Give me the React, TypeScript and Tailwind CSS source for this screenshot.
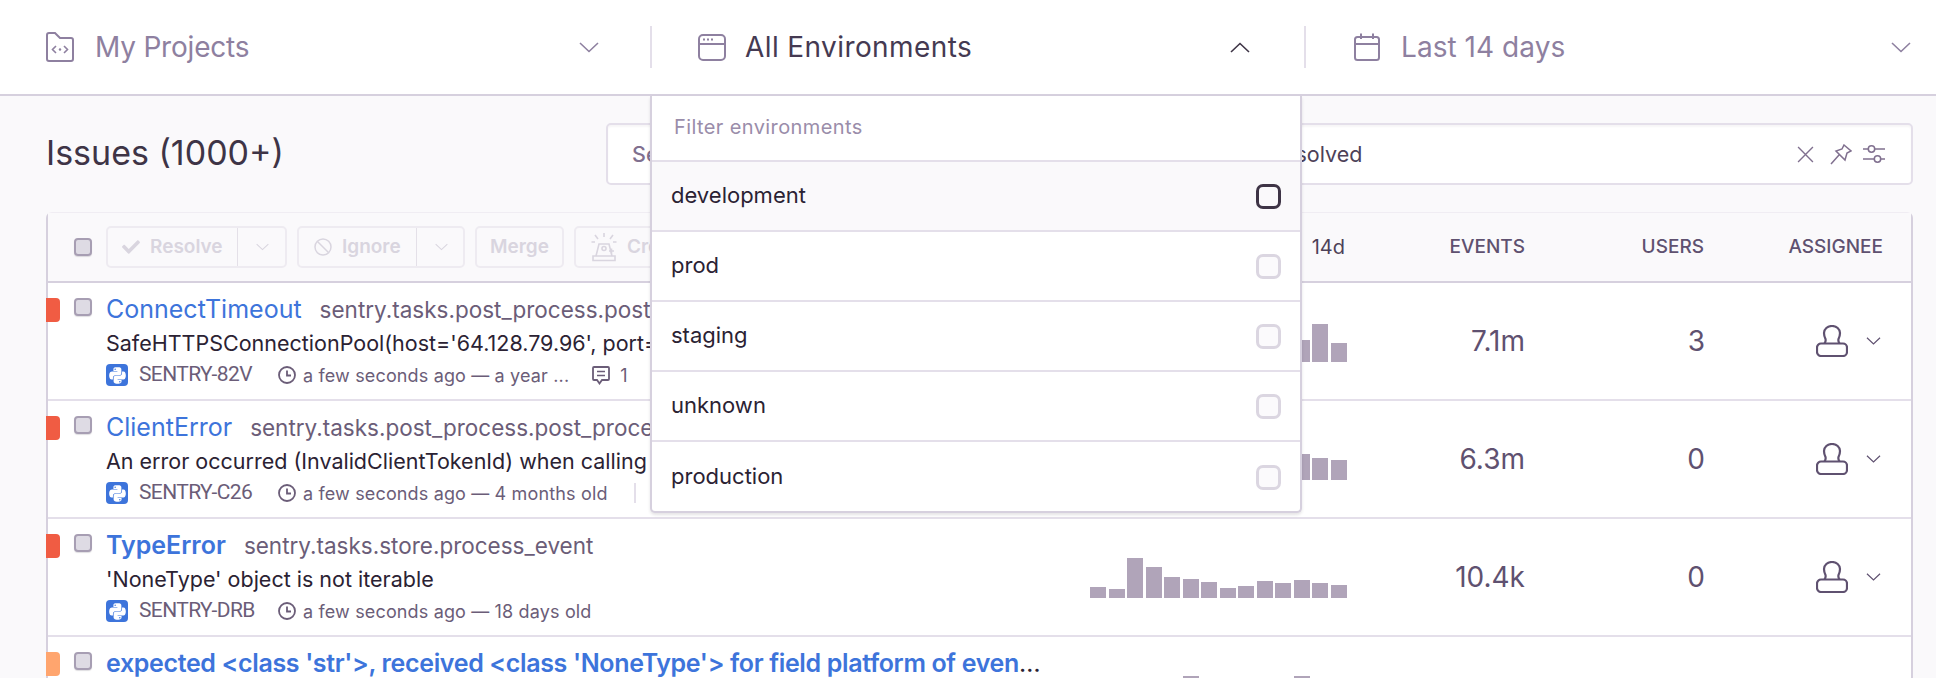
import { FaPython, FaCheck } from 'react-icons/fa';

const Chevron = ({ up = false, className = '' }: { up?: boolean; className?: string }) => (
  <svg viewBox="0 0 20 11" fill="none" stroke="currentColor" strokeWidth={1.6} className={className}>
    <path d={up ? 'M1 10 L10 1.5 L19 10' : 'M1 1 L10 9.5 L19 1'} />
  </svg>
);

const FolderIcon = () => (
  <svg viewBox="0 0 28 30" fill="none" stroke="currentColor" strokeWidth={2} className="h-[30px] w-[28px]">
    <path d="M1 3 a2 2 0 0 1 2-2 h6 l5 5 h11 a2 2 0 0 1 2 2 v19 a2 2 0 0 1-2 2 H3 a2 2 0 0 1-2-2 z" />
    <path d="M10 14 l-3.500 3.500 l3.500 3.500 M18 14 l3.500 3.500 l-3.500 3.500" strokeWidth={1.6} />
    <circle cx="14" cy="17.500" r="1.200" fill="currentColor" stroke="none" />
  </svg>
);

const WindowIcon = () => (
  <svg viewBox="0 0 28 27" fill="none" stroke="currentColor" strokeWidth={2} className="h-[27px] w-[28px]">
    <rect x="1" y="1" width="26" height="25" rx="4" />
    <path d="M1 10 H27" />
    <path d="M5 5.500 h2 M9 5.500 h2 M13 5.500 h2" strokeWidth={1.800} />
  </svg>
);

const CalendarIcon = () => (
  <svg viewBox="0 0 26 28" fill="none" stroke="currentColor" strokeWidth={2} className="h-[28px] w-[26px]">
    <rect x="1" y="4" width="24" height="23" rx="2.500" />
    <path d="M1 11 H25 M7 0.500 V6 M19 0.500 V6" />
  </svg>
);

const ClockIcon = () => (
  <svg viewBox="0 0 18 18" fill="none" stroke="currentColor" strokeWidth={1.800} className="h-[18px] w-[18px] shrink-0">
    <circle cx="9" cy="9" r="8" />
    <path d="M9 4.500 V9.500 H13" />
  </svg>
);

const CommentIcon = () => (
  <svg viewBox="0 0 18 19" fill="none" stroke="currentColor" strokeWidth={1.800} className="h-[19px] w-[18px] shrink-0">
    <path d="M2 1 H16 a1 1 0 0 1 1 1 V13 a1 1 0 0 1-1 1 H10 L7.500 17.500 L5 14 H2 a1 1 0 0 1-1-1 V2 a1 1 0 0 1 1-1 z" />
    <path d="M5 5.500 H13 M5 9.500 H13" strokeWidth={1.500} />
  </svg>
);

const UserIcon = () => (
  <svg viewBox="0 0 32 32" fill="none" stroke="currentColor" strokeWidth={2.200} className="h-[32px] w-[32px]">
    <path d="M5 18.500 H27 a4 4 0 0 1 4 4 v4.500 a4 4 0 0 1-4 4 H5 a4 4 0 0 1-4-4 v-4.500 a4 4 0 0 1 4-4 z" />
    <path d="M8.500 18.500 C9.500 17 10 16 9.500 14 C8.500 12 8 10 8 8 C8 4 11.500 1 16 1 C20.500 1 24 4 24 8 C24 10 23.500 12 22.500 14 C22 16 22.500 17 23.500 18.500" />
  </svg>
);

const BanIcon = () => (
  <svg viewBox="0 0 18 18" fill="none" stroke="currentColor" strokeWidth={1.500} className="h-[18px] w-[18px]">
    <circle cx="9" cy="9" r="8" />
    <path d="M3.500 3.500 L14.500 14.500" />
  </svg>
);

const SirenIcon = () => (
  <svg viewBox="0 0 26 30" fill="none" stroke="currentColor" strokeWidth={1.600} className="h-[30px] w-[26px]">
    <path d="M2 28.500 H24 V24 H2 z" />
    <path d="M5 24 L8 12 H18 L21 24" />
    <circle cx="13" cy="16.500" r="2" />
    <path d="M13 1 V5 M4 3 L7 7 M22 3 L19 7 M0.500 10 H4 M22 10 H25.500 M18 19 H23 M20.500 16.500 V21.500" />
  </svg>
);

const Checkbox = () => (
  <div className="h-[18px] w-[18px] shrink-0 rounded-[4px] border-2 border-[#a79eb3] bg-[#dedbe4] shadow-[0_1px_1px_rgba(43,34,51,0.15)]" />
);

const Bars = ({ heights }: { heights: number[] }) => (
  <div className="flex h-[42px] w-[257px] shrink-0 items-end gap-[2.500px]">
    {heights.map((h, i) => (
      <div key={i} className="w-[16px] shrink-0 bg-[#b0a4b9]" style={{ height: h }} />
    ))}
  </div>
);

const ENVIRONMENTS = ['development', 'prod', 'staging', 'unknown', 'production'];

const ISSUES = [
  {
    title: 'ConnectTimeout',
    sub: 'sentry.tasks.post_process.post_process_group',
    msg: "SafeHTTPSConnectionPool(host='64.128.79.96', port=443): Max retries exceeded",
    id: 'SENTRY-82V',
    age: 'a few seconds ago — a year ...',
    comments: true,
    divider: false,
    bars: [6, 8, 9, 12, 8, 7, 10, 9, 6, 7, 8, 22, 38, 19],
    events: '7.1m',
    users: '3',
  },
  {
    title: 'ClientError',
    sub: 'sentry.tasks.post_process.post_process_group',
    msg: 'An error occurred (InvalidClientTokenId) when calling the GetCallerIdentity',
    id: 'SENTRY-C26',
    age: 'a few seconds ago — 4 months old',
    comments: false,
    divider: true,
    bars: [6, 8, 9, 12, 8, 7, 10, 9, 6, 7, 8, 26, 22, 20],
    events: '6.3m',
    users: '0',
  },
  {
    title: 'TypeError',
    bold: true,
    sub: 'sentry.tasks.store.process_event',
    msg: "'NoneType' object is not iterable",
    id: 'SENTRY-DRB',
    age: 'a few seconds ago — 18 days old',
    comments: false,
    divider: false,
    bars: [11, 9, 40, 31, 21, 19, 16, 10, 12, 17, 15, 18, 15, 13],
    events: '10.4k',
    users: '0',
  },
  {
    title: "expected <class 'str'>, received <class 'NoneType'> for field platform of event",
    bold: true,
    sub: '',
    msg: '',
    id: '',
    age: '',
    comments: false,
    divider: false,
    bars: [20, 24, 30, 36, 37, 40, 28, 22, 24, 30, 38, 40, 38, 30],
    events: '',
    users: '',
    warn: true,
  },
];

export default function App() {
  return (
    <div className="relative h-[678px] overflow-hidden bg-[#faf9fb] font-['Inter',sans-serif] text-[#2b2233]">
      {/* Global selection header */}
      <header className="flex h-[96px] items-center border-b-2 border-[#d6d0de] bg-white">
        <div className="flex h-[42px] w-[650px] items-center pl-[46px] pr-[51px] text-[#8e80a0]">
          <FolderIcon />
          <span className="ml-[21px] flex-1 pb-[1px] text-[28px] tracking-[-0.2px]">My Projects</span>
          <Chevron className="h-[11px] w-[20px]" />
        </div>
        <div className="flex h-[42px] w-[654px] items-center border-l-2 border-[#e4dfea] pl-[46px] pr-[54px]">
          <span className="text-[#8e80a0]">
            <WindowIcon />
          </span>
          <span className="ml-[19px] flex-1 pb-[1px] text-[28px] tracking-[0.4px] text-[#453a52]">All Environments</span>
          <Chevron up className="h-[11px] w-[20px] text-[#3e3446]" />
        </div>
        <div className="flex h-[42px] flex-1 items-center border-l-2 border-[#e4dfea] pl-[48px] pr-[25px] text-[#8e80a0]">
          <CalendarIcon />
          <span className="ml-[21px] flex-1 pb-[1px] text-[28px] tracking-[0.05px]">Last 14 days</span>
          <Chevron className="h-[11px] w-[20px]" />
        </div>
      </header>

      <main className="pl-[46px] pr-[23px]">
        {/* Title and search */}
        <div className="flex items-center pb-[27px] pt-[27px]">
          <h1 className="w-[560px] pb-[4px] text-[34px] font-normal text-[#3e3446]">Issues (1000+)</h1>
          <div className="flex h-[62px] flex-1 items-center rounded-[5px] border-2 border-[#e4dfea] bg-white pl-[24px] pr-[25px] shadow-[inset_0_2px_2px_rgba(43,34,51,0.04)]">
            <span className="w-[595px] text-[21.500px] font-medium text-[#80708f]">Search</span>
            <span className="flex-1 text-[21.500px] text-[#4d4158]">is:unresolved</span>
            <div className="flex items-center text-[#80708f]">
              <svg viewBox="0 0 16 16" fill="none" stroke="currentColor" strokeWidth={1.300} className="h-[17px] w-[17px]">
                <path d="M1 1 L15 15 M15 1 L1 15" />
              </svg>
              <svg viewBox="0 0 22 21" fill="none" stroke="currentColor" strokeWidth={1.500} className="ml-[16px] h-[21px] w-[22px]">
                <path d="M14 1 L21 7 L17 9 L15 16 L6 7 L12 5 z M9 11 L1 20" />
              </svg>
              <svg viewBox="0 0 24 18" fill="none" stroke="currentColor" strokeWidth={1.500} className="ml-[10px] h-[18px] w-[24px]">
                <path d="M1 4 H6 M13 4 H23 M1 14 H12 M19 14 H23" />
                <circle cx="9.500" cy="4" r="3.200" />
                <circle cx="15.500" cy="14" r="3.200" />
              </svg>
            </div>
          </div>
        </div>

        {/* Issue stream */}
        <section className="rounded-t-[6px] border-x-2 border-t border-[#d6d0de] border-t-[#f0edf3] bg-white">
          <div className="flex h-[70px] items-center border-b-2 border-[#d6d0de] bg-[#faf9fb] pl-[26px] pr-[28px]">
            <Checkbox />
            <div className="ml-[14px] flex items-center gap-[10px] text-[19px] font-semibold text-[#d9d5df]">
              <div className="flex h-[42px] w-[181px] items-center rounded-[5px] border-2 border-[#eeebf1]">
                <div className="flex h-full w-[130px] items-center gap-[9px] border-r border-[#e4e0e8] pl-[13px]">
                  <FaCheck className="h-[18px] w-[20px]" />
                  <span>Resolve</span>
                </div>
                <Chevron className="ml-[18px] h-[8px] w-[13px]" />
              </div>
              <div className="flex h-[42px] w-[168px] items-center rounded-[5px] border-2 border-[#eeebf1]">
                <div className="flex h-full w-[118px] items-center gap-[10px] border-r border-[#e4e0e8] pl-[15px]">
                  <BanIcon />
                  <span>Ignore</span>
                </div>
                <Chevron className="ml-[18px] h-[8px] w-[13px]" />
              </div>
              <div className="flex h-[42px] w-[89px] items-center justify-center rounded-[5px] border-2 border-[#eeebf1]">Merge</div>
              <div className="flex h-[42px] w-[180px] items-center gap-[10px] rounded-[5px] border-2 border-[#eeebf1] pl-[15px]">
                <SirenIcon />
                <span>Create Alert</span>
              </div>
            </div>
            <div className="flex flex-1 items-center justify-end text-[19px] font-medium text-[#5f5170]">
              <span className="text-[20px] font-normal text-[#4d4158]">14d</span>
              <span className="w-[180px] text-right">EVENTS</span>
              <span className="w-[179px] text-right">USERS</span>
              <span className="w-[179px] text-right">ASSIGNEE</span>
            </div>
          </div>

          {ISSUES.map((issue) => (
            <div key={issue.title} className="relative flex h-[118px] border-b-2 border-[#e4dfea] pl-[26px] pr-[26px] first:h-[116px]">
              <div className={`absolute left-[-2px] top-[15px] h-[24px] w-[14px] rounded-r-[4px] ${issue.warn ? 'bg-[#ffa56e]' : 'bg-[#f05c43]'}`} />
              <div className="pt-[15px]">
                <Checkbox />
              </div>
              <div className="ml-[14px] w-[984px] shrink-0 pt-[11px]">
                <div className={`h-[33px] w-[937px] truncate text-[25px] leading-[30px] ${issue.warn ? 'tracking-[-0.35px]' : ''}`}>
                  <span className={`text-[#3d74db] ${issue.bold ? 'font-semibold' : 'font-normal'}`}>{issue.title}</span>
                  <span className="ml-[18px] text-[22.500px] text-[#6b5d78]">{issue.sub}</span>
                </div>
                <div className="h-[32px] truncate text-[21.500px] leading-[32px] text-[#2b2233]">{issue.msg}</div>
                {issue.id && (
                  <div className="flex h-[32px] items-center text-[#6b5d78]">
                    <span className="flex h-[22px] w-[22px] items-center justify-center rounded-[4px] bg-[#3d74db] text-white">
                      <FaPython className="h-[19px] w-[19px]" />
                    </span>
                    <span className="ml-[11px] w-[139px] font-['Roboto',sans-serif] text-[21px] tracking-[-0.6px]">{issue.id}</span>
                    <ClockIcon />
                    <span className="ml-[7px] text-[18px] tracking-[0.15px]">{issue.age}</span>
                    {issue.comments && (
                      <span className="ml-[23px] flex items-center gap-[10px] text-[18px]">
                        <CommentIcon />1
                      </span>
                    )}
                    {issue.divider && <span className="ml-[26px] h-[20px] w-[2px] bg-[#e4dfea]" />}
                  </div>
                )}
              </div>
              <div className="flex h-full flex-1 items-center">
                <Bars heights={issue.bars} />
                <div className="w-[178px] shrink-0 text-right text-[28px] text-[#5f5170]">{issue.events}</div>
                <div className="w-[180px] shrink-0 text-right text-[28px] text-[#5f5170]">{issue.users}</div>
                <div className="flex flex-1 items-center justify-end gap-[18px] pr-[4px] text-[#5f5170]">
                  <UserIcon />
                  <Chevron className="h-[8px] w-[15px]" />
                </div>
              </div>
            </div>
          ))}
        </section>
      </main>

      {/* Environment dropdown */}
      <div className="absolute left-[650px] top-[96px] h-[417px] w-[652px] rounded-b-[5px] border-x-2 border-b-2 border-[#d6d0de] bg-white shadow-[0_2px_3px_rgba(43,34,51,0.12)]">
        <div className="flex h-[66px] items-center border-b-2 border-[#e4dfea] pb-[2px] pl-[22px] text-[20px] tracking-[0.4px] text-[#9a8daa]">
          Filter environments
        </div>
        {ENVIRONMENTS.map((env, i) => (
          <div
            key={env}
            className={`flex h-[70px] items-center justify-between pl-[19px] pr-[19px] text-[22px] ${
              i === 0 ? 'bg-[#faf9fb]' : ''
            } ${i < ENVIRONMENTS.length - 1 ? 'border-b-2 border-[#e4dfea]' : ''}`}
          >
            <span className="pb-[2px]">{env}</span>
            <div
              className={`h-[25px] w-[25px] rounded-[7px] border-[3px] ${
                i === 0 ? 'border-[#3e3446] bg-[#faf9fb]' : 'border-[#dbd6e1] bg-[#fbfafc]'
              }`}
            />
          </div>
        ))}
      </div>
    </div>
  );
}
